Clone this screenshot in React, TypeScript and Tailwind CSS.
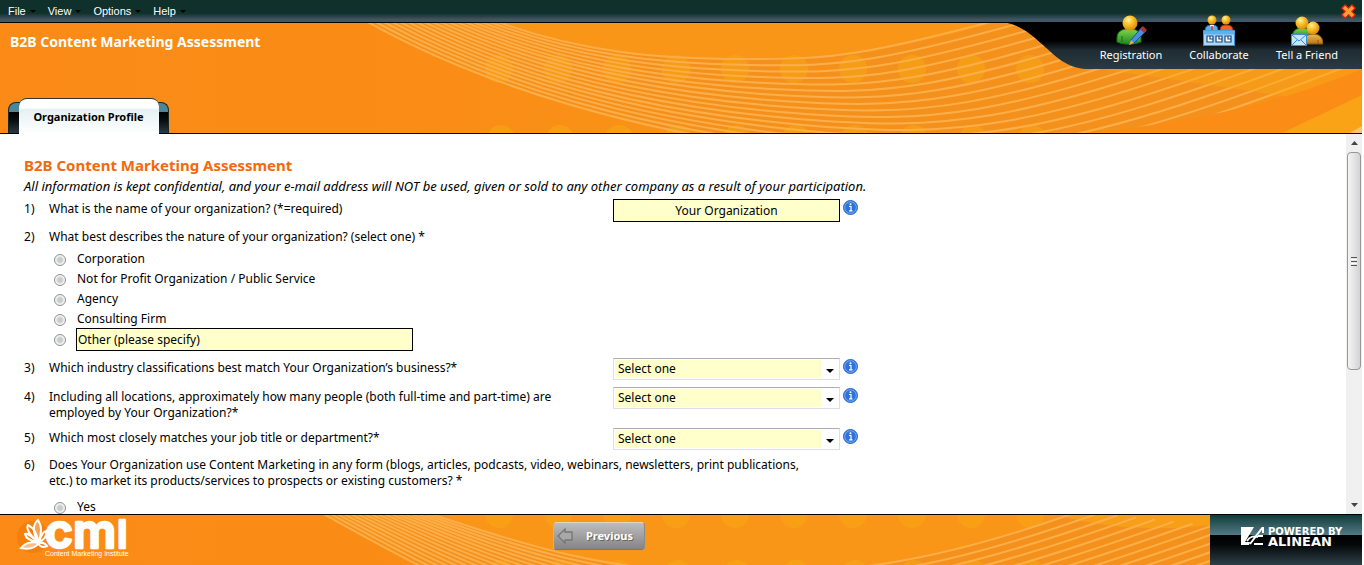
import React, { useState } from 'react'

const sectors = ['Select one', 'Technology', 'Manufacturing', 'Financial Services', 'Healthcare']
const sizes = ['Select one', '1 - 9', '10 - 99', '100 - 999', '1,000 or more']
const titles = ['Select one', 'Marketing', 'Sales', 'Executive Management', 'Operations']
const natures = ['Corporation', 'Not for Profit Organization / Public Service', 'Agency', 'Consulting Firm']

// The sweep is a family of curves blended between a top and a bottom one
const lerp = (a: number[], b: number[], t: number) => a.map((v, i) => v + (b[i] - v) * t)
const toPath = (p: number[]) =>
  `M${p[0]} ${p[1]}C${p[2]} ${p[3]} ${p[4]} ${p[5]} ${p[6]} ${p[7]}S${p[8]} ${p[9]} ${p[10]} ${p[11]}`
const sweep = (top: number[], bottom: number[], count: number) =>
  Array.from({ length: count }, (_, i) => toPath(lerp(top, bottom, i / (count - 1))))

const headerLines = sweep(
  [490, -4, 580, 30, 660, 36, 745, 36, 860, 36, 1060, -20],
  [366, -2, 480, 62, 640, 112, 830, 132, 1110, 136, 1350, 42],
  17,
)
const footerLines = sweep(
  [428, -2, 520, 28, 600, 56, 720, 58, 930, 50, 1080, -4],
  [322, -2, 430, 58, 520, 110, 720, 150, 1010, 160, 1380, 30],
  17,
)
const dots = [499, 558, 617, 676, 735, 794, 853, 912, 971, 1030]

const HeaderArt = () => (
  <svg className="absolute inset-0 h-full w-full" viewBox="0 0 1362 110" preserveAspectRatio="none" aria-hidden="true">
    <defs>
      <linearGradient id="orange" x1="0" x2="1" y1="0" y2="0">
        <stop offset="0" stopColor="#fb8b16" />
        <stop offset="0.35" stopColor="#fa8d16" />
        <stop offset="0.55" stopColor="#f99518" />
        <stop offset="1" stopColor="#fa9017" />
      </linearGradient>
      <linearGradient id="bay" x1="0" x2="0" y1="0" y2="1">
        <stop offset="0.4" stopColor="#000" />
        <stop offset="0.6" stopColor="#1f2c33" />
        <stop offset="1" stopColor="#2a3b43" />
      </linearGradient>
    </defs>
    <rect width="1362" height="110" fill="url(#orange)" />
    <path d="M366 -2C480 62 640 112 830 132S1110 136 1350 42L1362 0H480Z" fill="#f4911d" />
    <path d="M490 -4C580 30 660 36 745 36S860 36 1010 -4Z" fill="#f99618" />
    {dots.map((x) => (
      <g key={x} fill="#f9a814" opacity=".55">
        <circle cx={x} cy="46" r="14" />
        <circle cx={x + 2} cy="116" r="14" />
      </g>
    ))}
    {headerLines.map((d) => (
      <path key={d} d={d} fill="none" stroke="#fdae48" strokeWidth="2" />
    ))}
    <path d="M1100 46H1362V56L1290 74Z" fill="#f9a814" opacity=".4" />
    <path d="M1362 46C1300 72 1220 96 1090 110H1362Z" fill="#fb8c16" />
    <path d="M1282 110L1362 72V110Z" fill="#faa316" />
    <path d="M1350 110L1362 103V110Z" fill="#fcc46f" />
    <path d="M1000 -1C1018 0 1030 10 1043 22C1054 32 1066 45 1086 46H1362V-1Z" fill="url(#bay)" />
  </svg>
)

const FooterArt = () => (
  <svg className="absolute inset-0 h-full w-full" viewBox="0 0 1362 50" preserveAspectRatio="none" aria-hidden="true">
    <rect width="1362" height="50" fill="url(#orange)" />
    <path d="M322 -2C430 58 520 110 720 150S1010 160 1380 30V0H428Z" fill="#f4911d" />
    <path d="M428 -2C520 28 600 56 720 58S930 50 1080 -4Z" fill="#f99618" />
    {dots.map((x) => (
      <g key={x} fill="#f9a814" opacity=".55">
        <circle cx={x} cy="-1" r="14" />
        <circle cx={x + 2} cy="58" r="13" />
      </g>
    ))}
    <path d="M1060 0C1100 14 1170 16 1210 10V0Z" fill="#f9a814" opacity=".6" />
    {footerLines.map((d) => (
      <path key={d} d={d} fill="none" stroke="#fdae48" strokeWidth="2" />
    ))}
  </svg>
)

const IconDefs = () => (
  <svg className="absolute h-0 w-0" aria-hidden="true">
    <defs>
      <radialGradient id="head" cx="0.38" cy="0.3" r="0.75">
        <stop offset="0" stopColor="#fff2a8" />
        <stop offset="0.4" stopColor="#fbc52c" />
        <stop offset="1" stopColor="#d98207" />
      </radialGradient>
      <linearGradient id="green" x1="0" x2="0" y1="0" y2="1">
        <stop offset="0" stopColor="#7fd447" />
        <stop offset="1" stopColor="#1e8a22" />
      </linearGradient>
      <linearGradient id="tan" x1="0" x2="0" y1="0" y2="1">
        <stop offset="0" stopColor="#eebb55" />
        <stop offset="1" stopColor="#b87415" />
      </linearGradient>
    </defs>
  </svg>
)

const RegistrationIcon = () => (
  <svg width="32" height="32" viewBox="0 0 32 32" aria-hidden="true">
    <path d="M2 27V23C2 17 6 15 10 14H18C22 15 26 17 26 23V27C18 30 9 30 2 27Z" fill="url(#green)" stroke="#176c1d" />
    <path d="M7 21V27M21 21V27" stroke="#176c1d" />
    <circle cx="15" cy="8" r="7.5" fill="url(#head)" />
    <path d="M27 12L31 16 19 28 15 29 16 25Z" fill="#4a8fe0" stroke="#1d55a5" />
    <path d="M28 11L32 15 29 18 25 14Z" fill="#a8323a" />
    <path d="M16 25L19 28 14 30Z" fill="#f0a94b" />
  </svg>
)

const CollaborateIcon = () => (
  <svg width="32" height="32" viewBox="0 0 32 32" aria-hidden="true">
    <path d="M2 16C2 11 5 10 9 10S15 11 15 16Z" fill="#5fb0e8" stroke="#1e64a8" />
    <path d="M17 16C17 11 19 10 23 10S30 11 30 16Z" fill="#f0642a" stroke="#a82b0d" />
    <path d="M7 10L9 15 11 10Z" fill="#fff" />
    <path d="M9 11V16" stroke="#c22" strokeWidth="1.5" />
    <circle cx="9" cy="5" r="4.5" fill="url(#head)" />
    <circle cx="23" cy="5" r="4.5" fill="url(#head)" />
    <rect x="0.5" y="15.5" width="31" height="15" fill="#a9d8f8" stroke="#3b8bd0" />
    <rect x="0.5" y="15.5" width="31" height="4" fill="#5fb0ec" />
    {[4, 13, 22].map((x) => (
      <g key={x} fill="none" stroke="#164a86" strokeWidth="1.2">
        <path d={`M${x} 21H${x + 6}V27H${x}Z`} fill="#fff" />
        <path d={`M${x + 3} 21V24H${x + 6}`} />
      </g>
    ))}
  </svg>
)

const FriendIcon = () => (
  <svg width="32" height="32" viewBox="0 0 32 32" aria-hidden="true">
    <path d="M1 23C1 16 5 13 11 13S20 16 20 23Z" fill="url(#green)" stroke="#176c1d" />
    <circle cx="11" cy="8" r="6.5" fill="url(#head)" />
    <path d="M12 29C12 22 16 19 22 19S32 22 32 29Z" fill="url(#tan)" stroke="#8c560e" />
    <path d="M27 25V29" stroke="#8c560e" />
    <circle cx="22" cy="13" r="6.5" fill="url(#head)" />
    <rect x="0.5" y="19.5" width="15" height="11" fill="#c5e6fb" stroke="#3b8bd0" />
    <path d="M1 20L8 26 15 20M1 30L6 25M15 30L10 25" fill="none" stroke="#3b8bd0" />
  </svg>
)

const MenuItem = ({ label }: { label: string }) => (
  <button type="button" className="flex items-center gap-1">
    {label}
    <svg width="6" height="3" viewBox="0 0 6 3" aria-hidden="true">
      <path d="M0 0H6L3 3Z" fill="#000" />
    </svg>
  </button>
)

const Tool = ({ label, children }: { label: string; children: React.ReactNode }) => (
  <button type="button" className="flex w-22 flex-col items-center text-[11px] leading-4 whitespace-nowrap text-white">
    {children}
    {label}
  </button>
)

const Info = () => (
  <button type="button" aria-label="More information" className="ml-[3px] mt-px h-[15px] w-[15px] shrink-0">
    <svg width="15" height="15" viewBox="0 0 15 15" aria-hidden="true">
      <circle cx="7.5" cy="7.5" r="7" fill="#2e73dc" stroke="#2a66c8" />
      <circle cx="7.5" cy="7.5" r="5.8" fill="none" stroke="#9cc0f5" strokeWidth=".7" />
      <path d="M6 6.500H8V10.500M6 10.800H9.500" fill="none" stroke="#fff" strokeWidth="1.2" />
      <circle cx="7.5" cy="4.2" r="1" fill="#fff" />
    </svg>
  </button>
)

type RowProps = { n: number; id?: string; text: string; children?: React.ReactNode }

const Question = ({ n, id, text, children }: RowProps) => (
  <div className="flex items-start">
    <span className={children ? 'w-[25px] shrink-0 pt-0.5' : 'w-[25px] shrink-0'}>{n})</span>
    {children ? (
      <>
        <label htmlFor={id} className="w-[564px] shrink-0 pt-0.5 pr-4">{text}</label>
        {children}
        <Info />
      </>
    ) : (
      <p className="max-w-[768px]">{text}</p>
    )}
  </div>
)

const Select = ({ id, options }: { id: string; options: string[] }) => (
  <div className="relative h-[22px] w-[227px] shrink-0 border border-[#dcdfe6] border-t-[#abadb3] p-px">
    <select id={id} className="block h-full w-full appearance-none bg-[#ffffcc] pl-[3px] leading-[18px] outline-none">
      {options.map((o) => (
        <option key={o}>{o}</option>
      ))}
    </select>
    <span className="pointer-events-none absolute inset-y-0 right-0 flex w-[18px] items-center justify-center bg-white">
      <svg width="8" height="4" viewBox="0 0 8 4" className="mt-1" aria-hidden="true">
        <path d="M0 0H8L4 4Z" fill="#000" />
      </svg>
    </span>
  </div>
)

const radio =
  'mt-0.5 h-3 w-3 shrink-0 appearance-none rounded-full border border-[#8e8f8f] bg-radial from-[#c9cbcd] from-30% to-[#f4f4f4] to-60% checked:from-[#2e73dc]'

const ScrollBar = () => (
  <div className="flex w-4 shrink-0 flex-col items-center bg-[#f0f0f0]" aria-hidden="true">
    <div className="flex h-[18px] items-center">
      <svg width="7" height="4" viewBox="0 0 7 4"><path d="M0 4L3.500 0 7 4Z" fill="#444" /></svg>
    </div>
    <div className="flex h-[218px] w-[14px] flex-col items-center justify-center gap-px rounded-sm border border-[#979797] bg-linear-to-r from-[#f5f5f5] to-[#d3d3d6]">
      <i className="h-px w-1.5 bg-[#555]" />
      <i className="h-px w-1.5 bg-white" />
      <i className="h-px w-1.5 bg-[#555]" />
      <i className="h-px w-1.5 bg-white" />
      <i className="h-px w-1.5 bg-[#555]" />
    </div>
    <div className="mt-auto flex h-[18px] items-center">
      <svg width="7" height="4" viewBox="0 0 7 4"><path d="M0 0L3.500 4 7 0Z" fill="#444" /></svg>
    </div>
  </div>
)

const CmiLogo = () => (
  <svg width="120" height="50" viewBox="0 0 120 50" className="relative ml-4 overflow-visible" role="img" aria-label="CMI Content Marketing Institute">
    <circle cx="17" cy="22" r="16" fill="#f47f0c" />
    <g fill="none" stroke="#fff" strokeWidth="2">
      <path d="M22 27C13 20 10 13 12 10C18 13 21 18 22 27Z" />
      <path d="M22 27C16 17 17 9 22 5C26 11 26 19 22 27Z" fill="#fff" fillOpacity=".3" />
      <path d="M22 27C16 22 13 18 9 19C10 24 14 26 22 27Z" />
      <path d="M23 27C25 20 27 17 30 16C31 21 28 25 23 27Z" />
      <path d="M23 28C15 26 9 28 5 33C14 35 20 32 23 28Z" fill="#fff" fillOpacity=".5" />
      <path d="M22 28C26 27 29 28 31 31C27 33 24 32 22 28Z" />
    </g>
    <g fill="#fff" stroke="#fff" strokeWidth="2.500" strokeLinejoin="round" fontFamily="Inter, sans-serif" fontWeight="600">
      <text x="29" y="33" fontSize="48">cm</text>
      <text x="101" y="33" fontSize="38">I</text>
    </g>
    <text x="29" y="41" fontSize="7" fill="#fff" fontFamily="'Liberation Sans', Arial, sans-serif">Content Marketing Institute</text>
  </svg>
)

export default function App() {
  const [nature, setNature] = useState('')
  return (
    <div className="flex h-screen flex-col bg-white pr-0.5 font-['Noto_Sans','DejaVu_Sans_Condensed',sans-serif] text-[12px] leading-4 text-black">
      <IconDefs />
      <header className="relative shrink-0 border-b border-black">
        <div className="flex h-[23px] items-center gap-3 border-b border-black bg-linear-to-b from-[#10302b] from-60% to-[#3f5868] to-90% pl-2 font-['Liberation_Sans',Arial,sans-serif] text-[11px] text-white">
          <MenuItem label="File" />
          <MenuItem label="View" />
          <MenuItem label="Options" />
          <MenuItem label="Help" />
          <button type="button" aria-label="Close" className="ml-auto pr-1.5">
            <svg width="15" height="15" viewBox="0 0 15 15" aria-hidden="true">
              <path d="M2 2L13 13M13 2L2 13" stroke="#d8200a" strokeWidth="6" />
              <path d="M3 3L12 12M12 3L3 12" stroke="#ff9c36" strokeWidth="3.500" />
            </svg>
          </button>
        </div>
        <div className="relative flex h-[110px] flex-col justify-between">
          <HeaderArt />
          <h1 className="relative pt-[11px] pl-2.5 text-[14px] font-bold text-white">B2B Content Marketing Assessment</h1>
          <div role="tablist" className="relative ml-2 flex w-[161px] items-end justify-center rounded-t-lg">
            <span className="absolute inset-x-0 bottom-0 h-[31px] rounded-t-lg border border-b-0 border-[#16282c] bg-[linear-gradient(#4f8696_30%,#000_31%,#0a0f12_60%,#2a3b43)]" />
            <button
              type="button"
              role="tab"
              aria-selected="true"
              className="relative -mb-px h-9 w-[140px] rounded-t-lg border-t border-[#333] bg-linear-to-b from-white from-25% via-[#e6f1f4] via-30% to-white text-[11px] font-bold whitespace-nowrap"
            >
              Organization Profile
            </button>
          </div>
        </div>
        <nav className="absolute top-[15px] right-[11px] flex">
          <Tool label="Registration"><RegistrationIcon /></Tool>
          <Tool label="Collaborate"><CollaborateIcon /></Tool>
          <Tool label="Tell a Friend"><FriendIcon /></Tool>
        </nav>
      </header>

      <div className="flex min-h-0 flex-1">
        <main className="flex-1 overflow-y-auto pt-5 pl-6 [scrollbar-width:none]">
          <h2 className="text-[15px] leading-[22px] font-bold text-[#f26a0c]">B2B Content Marketing Assessment</h2>
          <p className="mb-[3px] text-[13px] leading-5 italic">
            All information is kept confidential, and your e-mail address will NOT be used, given or sold to any other company as a result of your participation.
          </p>
          <form className="flex flex-col gap-[7px]">
            <Question n={1} id="org" text="What is the name of your organization? (*=required)">
              <input id="org" defaultValue="Your Organization" className="h-[23px] w-[227px] shrink-0 border border-black bg-[#ffffcc] text-center outline-none" />
            </Question>
            <div className="mb-0.5">
              <Question n={2} text="What best describes the nature of your organization? (select one) *" />
              <div role="radiogroup" aria-label="Nature of your organization" className="mt-1 pl-[30px]">
                {natures.map((o) => (
                  <label key={o} className="flex h-5 items-center gap-[11px]">
                    <input type="radio" name="nature" checked={nature === o} onChange={() => setNature(o)} className={radio} />
                    {o}
                  </label>
                ))}
                <div className="flex h-5 items-center gap-2.5">
                  <input type="radio" name="nature" aria-label="Other" checked={nature === 'other'} onChange={() => setNature('other')} className={radio} />
                  <input aria-label="Other (please specify)" defaultValue="Other (please specify)" className="h-[23px] w-[337px] border border-black bg-[#ffffcc] pl-px outline-none" />
                </div>
              </div>
            </div>
            <Question n={3} id="sector" text="Which industry classifications best match Your Organization’s business?*">
              <Select id="sector" options={sectors} />
            </Question>
            <Question n={4} id="size" text="Including all locations, approximately how many people (both full-time and part-time) are employed by Your Organization?*">
              <Select id="size" options={sizes} />
            </Question>
            <Question n={5} id="title" text="Which most closely matches your job title or department?*">
              <Select id="title" options={titles} />
            </Question>
            <div>
              <Question n={6} text="Does Your Organization use Content Marketing in any form (blogs, articles, podcasts, video, webinars, newsletters, print publications, etc.) to market its products/services to prospects or existing customers? *" />
              <label className="mt-2 flex h-5 items-center gap-[11px] pl-[30px]">
                <input type="radio" name="usage" className={radio} />
                Yes
              </label>
            </div>
          </form>
        </main>
        <ScrollBar />
      </div>

      <footer className="relative flex h-[51px] shrink-0 items-stretch justify-between border-t border-black">
        <FooterArt />
        <CmiLogo />
        <button
          type="button"
          className="absolute top-[7px] left-[553px] flex h-7 w-[92px] items-center gap-3 rounded border border-t-[#e3d3c0] border-r-[#8a8a8a] border-b-[#777] border-l-[#b5b5b5] bg-linear-to-b from-[#bdbdbd] to-[#858585] pl-0.5 text-[11px] font-bold text-white text-shadow-[1px_1px_0_#666]"
        >
          <svg width="18" height="18" viewBox="0 0 18 18" aria-hidden="true">
            <path d="M2 9L9 2V5H16V13H9V16Z" fill="#a8a8a8" stroke="#757575" strokeWidth="1.300" />
          </svg>
          Previous
        </button>
        <a href="#alinean" className="relative flex w-[152px] gap-1 bg-[linear-gradient(#123c3a,#507885_39%,#000_40%,#05080a_60%,#2f4048)] pt-3 pl-[31px] font-['DejaVu_Sans',sans-serif] font-bold whitespace-nowrap text-white">
          <svg width="23" height="19" viewBox="0 0 23 19" aria-hidden="true">
            <path d="M0 0H13L4 15H9L8 18H0Z" fill="#fff" />
            <path d="M22 0L9 17M6 14C9 9 14 9 17 10M22 0V6M13 17H22M17 9H22" stroke="#fff" strokeWidth="2" fill="none" />
          </svg>
          <span className="flex flex-col">
            <span className="text-[10px] leading-[10px]">POWERED BY</span>
            <span className="text-[13px] leading-[10px]">ALINEAN</span>
          </span>
        </a>
      </footer>
    </div>
  )
}
